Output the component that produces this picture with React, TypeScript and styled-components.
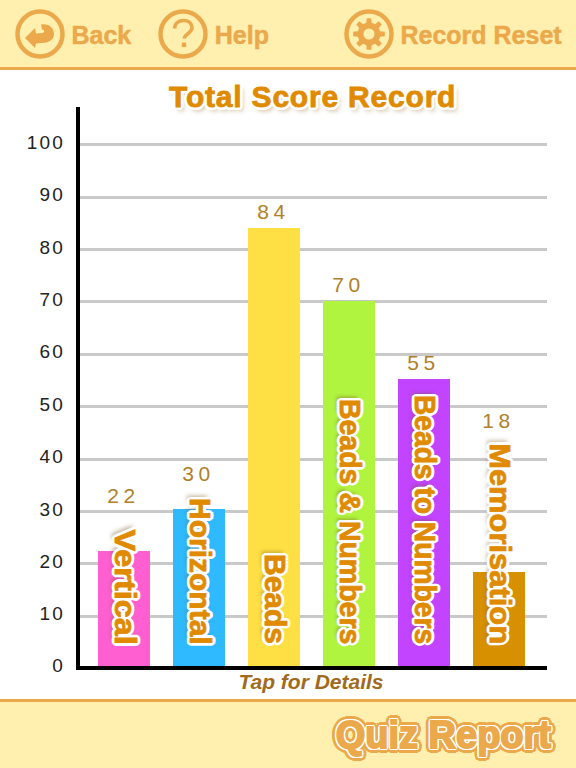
import React from "react";
import styled, { createGlobalStyle } from "styled-components";

const ORANGE = "#eba94b";
const DEEP = "#e08a00";

const ring = (r: number, color: string, steps = 16) =>
  Array.from({ length: steps }, (_, i) => {
    const a = (i * 2 * Math.PI) / steps;
    return `${(r * Math.cos(a)).toFixed(2)}px ${(r * Math.sin(a)).toFixed(2)}px 0 ${color}`;
  }).join(", ");

const Global = createGlobalStyle`
  html, body { margin: 0; padding: 0; background: #fff; }
  body { font-family: "Liberation Sans", Arial, sans-serif; }
`;

const Page = styled.div`
  width: 576px;
  height: 768px;
  display: flex;
  flex-direction: column;
  overflow: hidden;
`;

const TopBar = styled.header`
  height: 67px;
  flex: none;
  background: #fff0b0;
  border-bottom: 3px solid ${ORANGE};
  display: flex;
  align-items: center;
  padding-left: 15px;
`;

const NavButton = styled.div<{ $left?: number }>`
  display: flex;
  align-items: center;
  gap: 6.5px;
  margin-left: ${(p) => p.$left ?? 0}px;
`;

const NavLabel = styled.span`
  color: ${ORANGE};
  font-weight: 700;
  font-size: 25px;
  line-height: 1;
  padding-top: 4px;
  -webkit-text-stroke: 0.5px ${ORANGE};
`;

const Main = styled.main`
  flex: 1;
  display: flex;
  flex-direction: column;
`;

const Title = styled.h1`
  margin: 11px 0 0 0;
  height: 37px;
  padding-left: 169px;
  font-size: 30px;
  line-height: 32px;
  font-weight: 700;
  letter-spacing: 0.8px;
  color: ${DEEP};
  white-space: nowrap;
  -webkit-text-stroke: 0.8px ${DEEP};
  text-shadow: ${ring(3, "#fff")}, 3px 4px 4px rgba(150, 110, 40, 0.5);
`;

const ChartRow = styled.div`
  display: flex;
  height: 563px;
  margin-top: -11px;
`;

const YAxis = styled.div`
  width: 64px;
  flex: none;
  position: relative;
`;

const Tick = styled.span`
  position: absolute;
  right: -1px;
  transform: translateY(-50%);
  font-size: 19px;
  letter-spacing: 2.2px;
  line-height: 1;
  color: #222;
`;

const Plot = styled.div`
  position: relative;
  margin-left: 12px;
  width: 471px;
  box-sizing: border-box;
  border-left: 4px solid #000;
  border-bottom: 4px solid #000;
  display: flex;
  align-items: flex-end;
  gap: 23px;
  padding-left: 18px;
`;

const GridLine = styled.div`
  position: absolute;
  left: 0;
  right: 0;
  height: 3px;
  background: #c9c9c9;
`;

const BarSlot = styled.div`
  width: 52px;
  flex: none;
  position: relative;
  display: flex;
  flex-direction: column;
  align-items: center;
`;

const BarValue = styled.span`
  font-size: 21px;
  line-height: 1;
  letter-spacing: 4.5px;
  color: #b0802a;
  margin-bottom: 5.5px;
  padding-right: 1px;
`;

const BarStack = styled.div`
  width: 52px;
  display: flex;
  flex-direction: column;
  justify-content: flex-end;
`;

const Bar = styled.div<{ $color: string }>`
  width: 52px;
  background: ${(p) => p.$color};
`;

const BarLabel = styled.span<{ $bottom: number; $stretch: number }>`
  position: absolute;
  left: calc(50% + 1px);
  bottom: ${(p) => p.$bottom}px;
  transform: translateX(-50%) scaleY(${(p) => p.$stretch});
  transform-origin: center bottom;
  writing-mode: vertical-rl;
  white-space: nowrap;
  font-size: 30px;
  line-height: 30px;
  font-weight: 700;
  color: ${DEEP};
  -webkit-text-stroke: 0.8px ${DEEP};
  text-shadow: ${ring(3, "#fff")}, -4px 3px 4px rgba(120, 85, 30, 0.5);
`;

const Hint = styled.div`
  text-align: center;
  padding-left: 46px;
  font-size: 21px;
  line-height: 24px;
  font-weight: 700;
  font-style: italic;
  color: #a06a20;
`;

const BottomBar = styled.footer`
  height: 66px;
  flex: none;
  background: #fff0b0;
  border-top: 3px solid ${ORANGE};
  display: flex;
  align-items: center;
  justify-content: flex-end;
  padding-right: 25px;
`;

const QuizReport = styled.div`
  font-size: 38px;
  line-height: 1;
  font-weight: 700;
  color: ${ORANGE};
  white-space: nowrap;
  -webkit-text-stroke: 1.8px ${ORANGE};
  text-shadow: ${ring(2.2, "#fff")}, ${ring(5, ORANGE, 24)};
`;

const Ring = ({ children }: { children: React.ReactNode }) => (
  <svg width="50" height="50" viewBox="0 0 50 50" fill="none">
    <circle cx="25" cy="25" r="22.5" stroke={ORANGE} strokeWidth="4.5" />
    {children}
  </svg>
);

const gearPath = (() => {
  const cx = 25, cy = 25, teeth = 8;
  const step = (2 * Math.PI) / teeth;
  const pts: string[] = [];
  for (let i = 0; i < teeth; i++) {
    const a = i * step;
    const list: [number, number][] = [
      [11.5, a - step * 0.3],
      [16, a - step * 0.18],
      [16, a + step * 0.18],
      [11.5, a + step * 0.3],
    ];
    list.forEach(([r, t]) => {
      pts.push(`${(cx + r * Math.cos(t)).toFixed(2)} ${(cy + r * Math.sin(t)).toFixed(2)}`);
    });
  }
  return "M" + pts.join("L") + "Z";
})();

const BackIcon = () => (
  <Ring>
    <path
      d="M10 29 L20 19 L21 24.5 L27 24 C30 23.5 30 21 27 20.5 L26 15.5 C34 14 39 19 39 25 C39 31 33 34 27 34 L21 34.5 L20 39 Z"
      fill={ORANGE}
    />
  </Ring>
);

const HelpIcon = () => (
  <Ring>
    <path
      d="M16.5 19.5 C17 14 21 11.5 25.5 11.5 C30.5 11.5 34 14.5 34 18.8 C34 24 27 24.5 26 29.5"
      stroke={ORANGE}
      strokeWidth="3.6"
      fill="none"
    />
    <rect x="23.8" y="33.5" width="4.4" height="4.6" fill={ORANGE} />
  </Ring>
);

const GearIcon = () => (
  <Ring>
    <path d={gearPath} fill={ORANGE} />
    <circle cx="25" cy="25" r="5.5" fill="#fff0b0" />
  </Ring>
);

const TICKS = [100, 90, 80, 70, 60, 50, 40, 30, 20, 10];
const BARS = [
  { value: 22, label: "Vertical", color: "#ff5fd0", bottom: 21, stretch: 1.08, clear: 155 },
  { value: 30, label: "Horizontal", color: "#2fbaff", bottom: 21, stretch: 1, clear: 177 },
  { value: 84, label: "Beads", color: "#ffe044", bottom: 22, stretch: 1, clear: 0 },
  { value: 70, label: "Beads & Numbers", color: "#b0f440", bottom: 22, stretch: 0.95, clear: 0 },
  { value: 55, label: "Beads to Numbers", color: "#c244ff", bottom: 22, stretch: 0.94, clear: 0 },
  { value: 18, label: "Memorisation", color: "#d69000", bottom: 22, stretch: 1.03, clear: 230 },
];

const PLOT_TOP = 107;
const lineY = (v: number) => 668.7 - v * 5.24 - PLOT_TOP;

export default function App() {
  return (
    <Page>
      <Global />
      <TopBar>
        <NavButton>
          <BackIcon />
          <NavLabel>Back</NavLabel>
        </NavButton>
        <NavButton $left={27}>
          <HelpIcon />
          <NavLabel>Help</NavLabel>
        </NavButton>
        <NavButton $left={75}>
          <GearIcon />
          <NavLabel>Record Reset</NavLabel>
        </NavButton>
      </TopBar>
      <Main>
        <Title>Total Score Record</Title>
        <ChartRow>
          <YAxis>
            {TICKS.map((t) => (
              <Tick key={t} style={{ top: lineY(t) - 3 }}>{t}</Tick>
            ))}
            <Tick style={{ top: 558 }}>0</Tick>
          </YAxis>
          <Plot>
            {TICKS.map((t) => (
              <GridLine key={t} style={{ top: lineY(t) - 1.5 }} />
            ))}
            {BARS.map((b) => (
              <BarSlot key={b.label}>
                <BarValue>{b.value}</BarValue>
                <BarStack style={{ height: Math.max(b.clear, b.value * 5.22) }}>
                  <Bar $color={b.color} style={{ height: b.value * 5.22 }} />
                </BarStack>
                <BarLabel $bottom={b.bottom} $stretch={b.stretch}>{b.label}</BarLabel>
              </BarSlot>
            ))}
          </Plot>
        </ChartRow>
        <Hint>Tap for Details</Hint>
      </Main>
      <BottomBar>
        <QuizReport>Quiz Report</QuizReport>
      </BottomBar>
    </Page>
  );
}
